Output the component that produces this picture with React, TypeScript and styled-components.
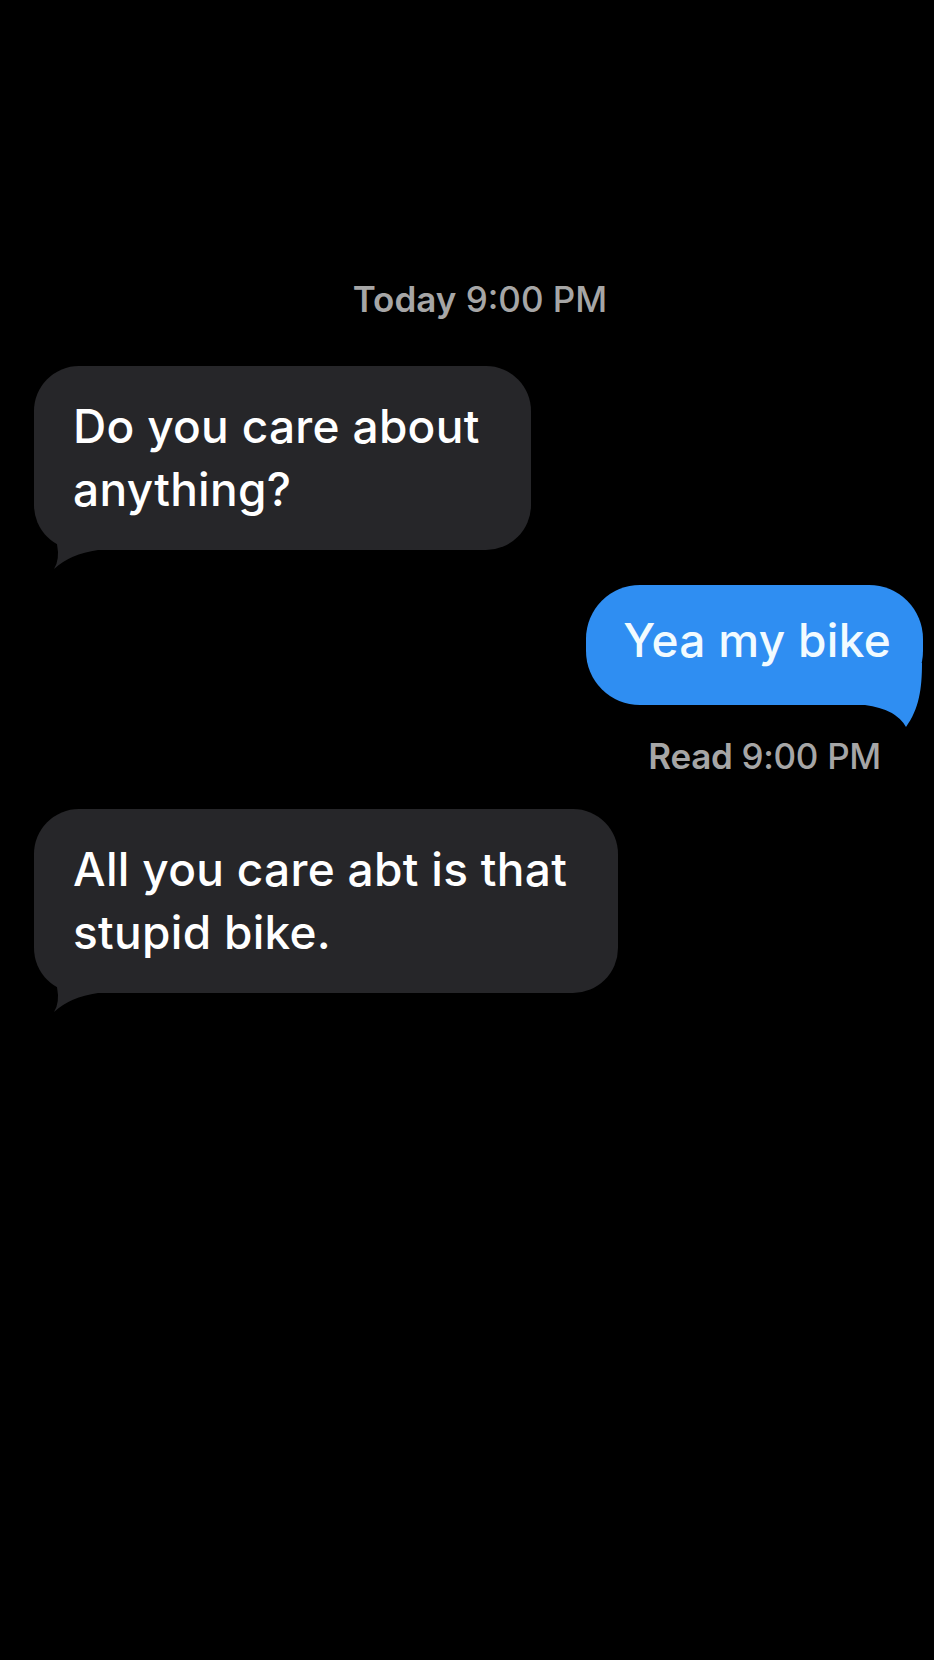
import React from "react";
import styled, { createGlobalStyle } from "styled-components";

const GlobalStyle = createGlobalStyle`
  html, body {
    margin: 0;
    padding: 0;
    background: #000;
  }
  body {
    font-family: Inter, "Liberation Sans", Arial, sans-serif;
    -webkit-font-smoothing: antialiased;
  }
`;

const Screen = styled.main`
  min-height: 1660px;
  background: #000;
  display: flex;
  flex-direction: column;
  padding-top: 278px;
  box-sizing: border-box;
`;

const Stamp = styled.div`
  text-align: center;
  padding-left: 26px;
  font-size: 35px;
  line-height: 42px;
  color: #a6a6a6;
  font-weight: 500;
  strong {
    font-weight: 600;
  }
`;

const Receipt = styled.div<{ $gap: number }>`
  margin-top: ${(p) => p.$gap}px;
  text-align: right;
  padding-right: 53px;
  font-size: 35px;
  line-height: 42px;
  color: #a6a6a6;
  font-weight: 500;
  letter-spacing: -0.3px;
  strong {
    font-weight: 600;
  }
`;

const Row = styled.div<{ $out?: boolean; $gap: number }>`
  display: flex;
  justify-content: ${(p) => (p.$out ? "flex-end" : "flex-start")};
  margin-top: ${(p) => p.$gap}px;
  padding: ${(p) => (p.$out ? "0 11px 0 0" : "0 0 0 34px")};
`;

const Bubble = styled.div<{ $out?: boolean }>`
  position: relative;
  box-sizing: border-box;
  width: fit-content;
  background: ${(p) => (p.$out ? "#2f8ef2" : "#262629")};
  color: ${(p) => (p.$out ? "#f2fbff" : "#ffffff")};
  border-radius: ${(p) => (p.$out ? "54px" : "45px")};
  padding: ${(p) => (p.$out ? "24px 32px 33px 37px" : "29px 51px 29px 39px")};
  font-size: 46px;
  line-height: 63px;
  font-weight: 500;
  letter-spacing: 0.3px;
  white-space: nowrap;
`;

const TailSvg = styled.svg<{ $out?: boolean }>`
  position: absolute;
  bottom: -24px;
  width: 70px;
  height: 70px;
  ${(p) => (p.$out ? "right: 0; transform: scaleX(-1);" : "left: 0;")}
  overflow: visible;
`;

function Tail({ out }: { out?: boolean }) {
  const color = out ? "#2f8ef2" : "#262629";
  // bubble bottom edge sits at y = 46 in this viewBox, bubble side edge at x = 0
  const d = out
    ? "M1 4 C1 30 4 50 17 68 Q27 50 58 46 L58 4 Z"
    : "M23 40 Q26 56 20 65 Q36 50 64 46 L64 34 L23 34 Z";
  return (
    <TailSvg $out={out} viewBox="0 0 70 70" aria-hidden="true">
      <path d={d} fill={color} />
    </TailSvg>
  );
}

type Msg = { out?: boolean; lines: string[]; gap: number };

function Message({ out, lines, gap }: Msg) {
  return (
    <Row $out={out} $gap={gap}>
      <Bubble $out={out}>
        {lines.map((l, i) => (
          <React.Fragment key={i}>
            {i > 0 && <br />}
            {l}
          </React.Fragment>
        ))}
        <Tail out={out} />
      </Bubble>
    </Row>
  );
}

export default function App() {
  return (
    <>
      <GlobalStyle />
      <Screen>
        <Stamp>
          <strong>Today</strong> 9:00 PM
        </Stamp>
        <Message gap={46} lines={["Do you care about", "anything?"]} />
        <Message gap={35} out lines={["Yea my bike"]} />
        <Receipt $gap={30}>
          <strong>Read</strong> 9:00 PM
        </Receipt>
        <Message gap={32} lines={["All you care abt is that", "stupid bike."]} />
      </Screen>
    </>
  );
}
